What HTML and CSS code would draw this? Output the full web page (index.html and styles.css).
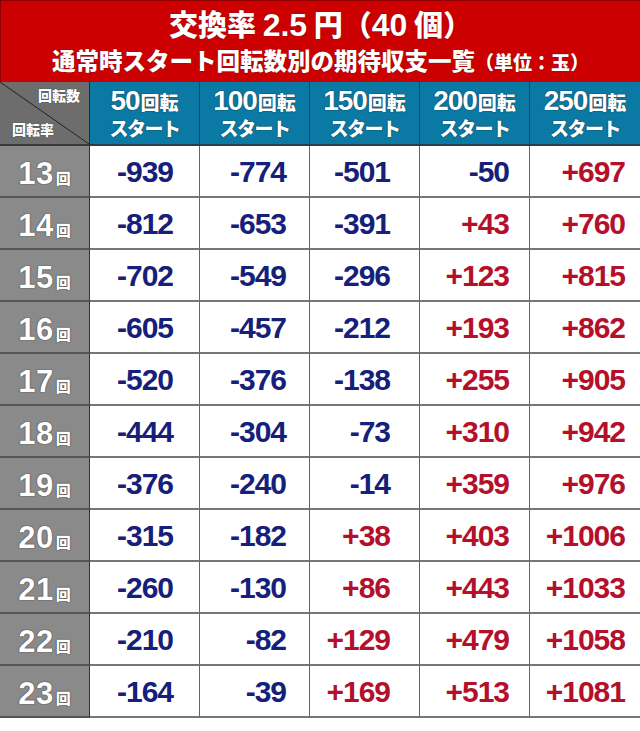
FILE: index.html
```html
<!DOCTYPE html>
<html lang="ja">
<head>
<meta charset="utf-8">
<link rel="stylesheet" href="styles.css">
</head>
<body>
<div class="sheet">
  <header class="title">
    <div class="t1">交換率 <span class="lat">2.5</span> 円（<span class="lat">40</span> 個）</div>
    <div class="t2">通常時スタート回転数別の期待収支一覧<span class="unit">（単位：玉）</span></div>
  </header>
  <div class="grid">
    <div class="corner"><span class="c-top">回転数</span><span class="c-bot">回転率</span></div>
    <div class="hcell"><div class="h1"><span class="hn">50</span>回転</div><div class="h2">スタート</div></div>
    <div class="hcell"><div class="h1"><span class="hn">100</span>回転</div><div class="h2">スタート</div></div>
    <div class="hcell"><div class="h1"><span class="hn">150</span>回転</div><div class="h2">スタート</div></div>
    <div class="hcell"><div class="h1"><span class="hn">200</span>回転</div><div class="h2">スタート</div></div>
    <div class="hcell last"><div class="h1"><span class="hn">250</span>回転</div><div class="h2">スタート</div></div>

    <div class="rl"><span class="rn">13</span><span class="rk">回</span></div>
    <div class="num c1 neg">-939</div><div class="num c2 neg">-774</div><div class="num c3 neg">-501</div><div class="num c4 neg">-50</div><div class="num c5 pos">+697</div>

    <div class="rl"><span class="rn">14</span><span class="rk">回</span></div>
    <div class="num c1 neg">-812</div><div class="num c2 neg">-653</div><div class="num c3 neg">-391</div><div class="num c4 pos">+43</div><div class="num c5 pos">+760</div>

    <div class="rl"><span class="rn">15</span><span class="rk">回</span></div>
    <div class="num c1 neg">-702</div><div class="num c2 neg">-549</div><div class="num c3 neg">-296</div><div class="num c4 pos">+123</div><div class="num c5 pos">+815</div>

    <div class="rl"><span class="rn">16</span><span class="rk">回</span></div>
    <div class="num c1 neg">-605</div><div class="num c2 neg">-457</div><div class="num c3 neg">-212</div><div class="num c4 pos">+193</div><div class="num c5 pos">+862</div>

    <div class="rl"><span class="rn">17</span><span class="rk">回</span></div>
    <div class="num c1 neg">-520</div><div class="num c2 neg">-376</div><div class="num c3 neg">-138</div><div class="num c4 pos">+255</div><div class="num c5 pos">+905</div>

    <div class="rl"><span class="rn">18</span><span class="rk">回</span></div>
    <div class="num c1 neg">-444</div><div class="num c2 neg">-304</div><div class="num c3 neg">-73</div><div class="num c4 pos">+310</div><div class="num c5 pos">+942</div>

    <div class="rl"><span class="rn">19</span><span class="rk">回</span></div>
    <div class="num c1 neg">-376</div><div class="num c2 neg">-240</div><div class="num c3 neg">-14</div><div class="num c4 pos">+359</div><div class="num c5 pos">+976</div>

    <div class="rl"><span class="rn">20</span><span class="rk">回</span></div>
    <div class="num c1 neg">-315</div><div class="num c2 neg">-182</div><div class="num c3 pos">+38</div><div class="num c4 pos">+403</div><div class="num c5 pos">+1006</div>

    <div class="rl"><span class="rn">21</span><span class="rk">回</span></div>
    <div class="num c1 neg">-260</div><div class="num c2 neg">-130</div><div class="num c3 pos">+86</div><div class="num c4 pos">+443</div><div class="num c5 pos">+1033</div>

    <div class="rl"><span class="rn">22</span><span class="rk">回</span></div>
    <div class="num c1 neg">-210</div><div class="num c2 neg">-82</div><div class="num c3 pos">+129</div><div class="num c4 pos">+479</div><div class="num c5 pos">+1058</div>

    <div class="rl"><span class="rn">23</span><span class="rk">回</span></div>
    <div class="num c1 neg">-164</div><div class="num c2 neg">-39</div><div class="num c3 pos">+169</div><div class="num c4 pos">+513</div><div class="num c5 pos">+1081</div>
  </div>
</div>
</body>
</html>
```
FILE: styles.css
```css
* { box-sizing: border-box; }
html, body { margin: 0; padding: 0; background: #fff; }
body { font-family: "Noto Sans CJK JP", "Liberation Sans", sans-serif; }

.sheet { width: 640px; }

.title {
  height: 82px;
  background: #cc0000;
  border-top: 1px solid #8e0000;
  border-left: 1px solid #8e0000;
  color: #fff;
  text-align: center;
  font-weight: 900;
  text-shadow: 0 0 1px rgba(60,0,0,.8);
  display: flex;
  flex-direction: column;
  align-items: center;
}
.t1 {
  font-size: 29px;
  line-height: 34px;
  margin-top: 5px;
  white-space: nowrap;
}
.t1 .lat { font-family: "Liberation Sans", sans-serif; font-weight: 700; font-size: 32px; }
.t2 {
  font-size: 23.5px;
  line-height: 30px;
  margin-top: 3px;
  white-space: nowrap;
}
.t2 .unit { font-size: 19px; }

.grid {
  display: grid;
  grid-template-columns: 90px repeat(5, 110px);
  grid-template-rows: 64px repeat(11, 52px);
}

.corner {
  background: linear-gradient(to top right, transparent calc(50% - 0.8px), #1e1e1e 50%, transparent calc(50% + 0.8px)), #6d6d6d;
  border-right: 1px solid #2a2a2a;
  border-bottom: 2px solid #3a3a3a;
  color: #fff;
  font-size: 14px;
  font-weight: 900;
  line-height: 16px;
  text-shadow: 0 0 1px #222;
  display: flex;
  flex-direction: column;
  justify-content: space-between;
  padding: 5px 9px 7px 12px;
}
.c-top { align-self: flex-end; }
.c-bot { align-self: flex-start; }

.hcell {
  background: #0a7aa4;
  border-right: 1px solid #1f4759;
  border-bottom: 2px solid #2b3d48;
  color: #fff;
  font-weight: 900;
  text-align: center;
  text-shadow: 0 0 1px #0b2f45, 0 0 1px #0b2f45;
  display: flex;
  flex-direction: column;
  align-items: center;
  padding-top: 5px;
}
.hcell.last { border-right: none; }
.h1 {
  font-size: 19px;
  line-height: 28px;
  white-space: nowrap;
}
.hn {
  font-family: "Liberation Sans", sans-serif;
  font-weight: 700;
  font-size: 28px;
  letter-spacing: -1px;
  margin-right: 1px;
}
.h2 {
  font-size: 19px;
  line-height: 24px;
  letter-spacing: -1.5px;
  white-space: nowrap;
}

.rl {
  background: #8a8a8a;
  border-right: 1px solid #333;
  border-bottom: 2px solid #555;
  color: #fff;
  display: flex;
  align-items: baseline;
  justify-content: center;
  padding-top: 11px;
  text-shadow: 0 0 1px #333, 0 0 1px #333;
}
.rn {
  font-family: "Liberation Sans", sans-serif;
  font-weight: 700;
  font-size: 31px;
  line-height: 34px;
  letter-spacing: 0.5px;
}
.rk {
  font-size: 15px;
  font-weight: 900;
  margin-left: 2px;
}

.num {
  border-right: 1px solid #666;
  border-bottom: 2px solid #777;
  font-family: "Liberation Sans", sans-serif;
  font-weight: 700;
  font-size: 30px;
  letter-spacing: -1px;
  display: flex;
  align-items: center;
  justify-content: flex-end;
  padding-top: 1px;
}
.num.c1 { padding-right: 26px; }
.num.c2 { padding-right: 23px; }
.num.c3 { padding-right: 29px; }
.num.c4 { padding-right: 20px; }
.num.c5 { padding-right: 15px; border-right: none; }
.neg { color: #15207a; }
.pos { color: #b5102b; }
```
